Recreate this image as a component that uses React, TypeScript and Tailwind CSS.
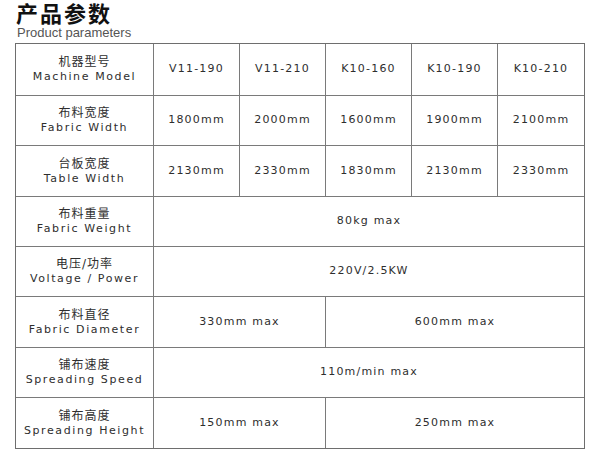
import React from "react";

const font = { fontFamily: '"DejaVu Sans", "Noto Sans CJK SC", sans-serif' };

function Label({ zh, en }: { zh: string; en: string }) {
  return (
    <div className="bg-white flex flex-col items-center justify-center text-[#2e2e2e]">
      <div className="text-[12px] leading-[15px] tracking-[1px]">{zh}</div>
      <div className="text-[11px] leading-[14px] tracking-[1.6px]">{en}</div>
    </div>
  );
}

function Val({ children, span }: { children: React.ReactNode; span?: string }) {
  return (
    <div className={`bg-white flex items-center justify-center text-[11px] tracking-[1.2px] text-[#2e2e2e] ${span ?? ""}`}>
      {children}
    </div>
  );
}

export default function App() {
  return (
    <div className="w-[600px] h-[459px] bg-white" style={font}>
      <div className="pl-[16px] flex flex-col">
        <div
          className="h-[25px] text-[22px] leading-[25px] tracking-[2px] font-bold text-[#111]"
          style={{ fontFamily: '"Noto Sans CJK SC", sans-serif' }}
        >
          产品参数
        </div>
        <div
          className="h-[14px] text-[13px] leading-[14px] text-[#555] pl-[1px] mt-[1px]"
          style={{ fontFamily: '"Liberation Sans", Arial, sans-serif' }}
        >
          Product parameters
        </div>
      </div>
      <div className="ml-[15px] mt-[3px] w-[570px] border border-[#6e6e6e] bg-[#7a7a7a] grid grid-cols-[137px_85px_85px_85px_85px_86px] grid-rows-[51px_49px_50px_49px_49px_50px_49px_50px] gap-px">
        <Label zh="机器型号" en="Machine Model" />
        <Val>V11-190</Val>
        <Val>V11-210</Val>
        <Val>K10-160</Val>
        <Val>K10-190</Val>
        <Val>K10-210</Val>

        <Label zh="布料宽度" en="Fabric Width" />
        <Val>1800mm</Val>
        <Val>2000mm</Val>
        <Val>1600mm</Val>
        <Val>1900mm</Val>
        <Val>2100mm</Val>

        <Label zh="台板宽度" en="Table Width" />
        <Val>2130mm</Val>
        <Val>2330mm</Val>
        <Val>1830mm</Val>
        <Val>2130mm</Val>
        <Val>2330mm</Val>

        <Label zh="布料重量" en="Fabric Weight" />
        <Val span="col-span-5">80kg max</Val>

        <Label zh="电压/功率" en="Voltage / Power" />
        <Val span="col-span-5">220V/2.5KW</Val>

        <Label zh="布料直径" en="Fabric Diameter" />
        <Val span="col-span-2">330mm max</Val>
        <Val span="col-span-3">600mm max</Val>

        <Label zh="铺布速度" en="Spreading Speed" />
        <Val span="col-span-5">110m/min max</Val>

        <Label zh="铺布高度" en="Spreading Height" />
        <Val span="col-span-2">150mm max</Val>
        <Val span="col-span-3">250mm max</Val>
      </div>
    </div>
  );
}
